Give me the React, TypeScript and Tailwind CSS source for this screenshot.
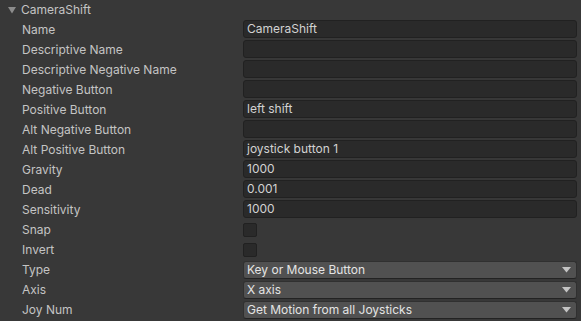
import React from "react";

type Row = { label: string; kind: "text" | "check" | "select"; value?: string };

const rows: Row[] = [
  { label: "Name", kind: "text", value: "CameraShift" },
  { label: "Descriptive Name", kind: "text", value: "" },
  { label: "Descriptive Negative Name", kind: "text", value: "" },
  { label: "Negative Button", kind: "text", value: "" },
  { label: "Positive Button", kind: "text", value: "left shift" },
  { label: "Alt Negative Button", kind: "text", value: "" },
  { label: "Alt Positive Button", kind: "text", value: "joystick button 1" },
  { label: "Gravity", kind: "text", value: "1000" },
  { label: "Dead", kind: "text", value: "0.001" },
  { label: "Sensitivity", kind: "text", value: "1000" },
  { label: "Snap", kind: "check" },
  { label: "Invert", kind: "check" },
  { label: "Type", kind: "select", value: "Key or Mouse Button" },
  { label: "Axis", kind: "select", value: "X axis" },
  { label: "Joy Num", kind: "select", value: "Get Motion from all Joysticks" },
];

export default function App() {
  return (
    <div
      className="w-[581px] h-[321px] bg-[#383838] text-[12px] overflow-hidden"
      style={{ fontFamily: "Inter, 'Noto Sans', sans-serif" }}
    >
      <div className="h-[20px] flex items-center pl-[8px] text-[#c4c4c4]">
        <svg width="9" height="8" viewBox="0 0 9 8" className="mr-[4px]">
          <polygon points="0,1 8,1 4,7.5" fill="#8c8c8c" />
        </svg>
        <span>CameraShift</span>
      </div>
      {rows.map((r) => (
        <div key={r.label} className="h-[20px] flex">
          <div className="w-[243px] pl-[22px] text-[#c4c4c4] whitespace-nowrap flex items-center">{r.label}</div>
          <div className="flex-1 pr-[4px] flex">
            {r.kind === "text" && (
              <div className="h-[18px] w-full rounded-[3px] border border-[#212121] bg-[#2a2a2a] text-[#d2d2d2] pl-[3px] flex items-center leading-none">
                {r.value}
              </div>
            )}
            {r.kind === "check" && (
              <div className="self-center h-[14px] w-[14px] rounded-[2px] border border-[#212121] bg-[#2a2a2a]" />
            )}
            {r.kind === "select" && (
              <div className="mt-[1px] h-[18px] w-full rounded-[3px] border border-[#303030] border-b-[#232323] bg-[#515151] text-[#e4e4e4] pl-[3px] pr-[5px] flex items-center justify-between leading-none">
                <span>{r.value}</span>
                <svg width="9" height="6" viewBox="0 0 9 6">
                  <polygon points="0,0 9,0 4.5,5.5" fill="#c4c4c4" />
                </svg>
              </div>
            )}
          </div>
        </div>
      ))}
    </div>
  );
}
